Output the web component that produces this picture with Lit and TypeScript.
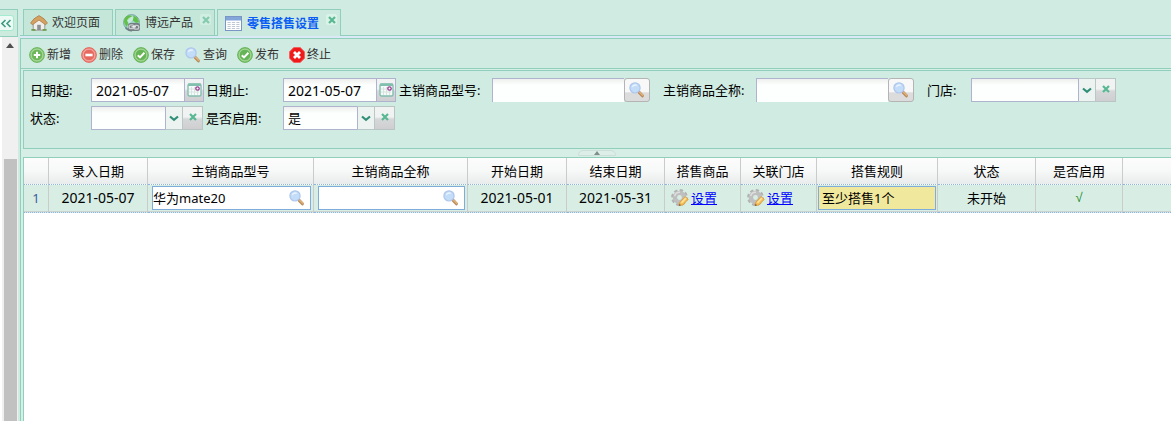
import { LitElement, html, css, svg, nothing } from "lit";
import { customElement, property } from "lit/decorators.js";

const search = html`<svg width="16" height="16" viewBox="0 0 16 16" aria-hidden="true">
  <path d="M10.2 10.4 13.4 13.8" stroke="#b98a5a" stroke-width="3" stroke-linecap="round" />
  <path d="M10.6 10.2 13.6 13.2" stroke="#e3b27a" stroke-width="1.4" stroke-linecap="round" />
  <circle cx="6" cy="5.9" r="5.1" fill="#c3dcf8" stroke="#aec6ec" stroke-width="1.2" />
  <path d="M2.8 5.4A3.3 3.3 0 0 1 8.6 3.4Q5 3.6 2.8 5.4Z" fill="#e9f4ff" />
</svg>`;

const disc = (light: string, dark: string, glyph: unknown) => html`<svg width="16" height="16" viewBox="0 0 16 16" aria-hidden="true">
  <circle cx="8" cy="8" r="7.4" fill=${light} stroke=${dark} stroke-opacity="0.75" stroke-width="1" />
  <circle cx="8" cy="8" r="5.7" fill=${dark} fill-opacity="0.6" stroke="#fff" stroke-opacity="0.4" stroke-width="0.8" />
  ${glyph}
</svg>`;

const add = disc("#8fcc7c", "#55a845", svg`<path d="M8 4.800v6.400M4.800 8h6.400" stroke="#fff" stroke-width="2" />`);
const remove = disc("#f08a80", "#e0534a", svg`<path d="M4.400 8h7.200" stroke="#fff" stroke-width="2.600" />`);
const accept = disc("#88ca76", "#4fa540", svg`<path d="M4.800 8.200 7 10.400 11.400 5.800" fill="none" stroke="#fff" stroke-width="2" />`);
const stop = html`<svg width="16" height="16" viewBox="0 0 16 16" aria-hidden="true">
  <path d="M4.800.5h6.400l4.300 4.300v6.400l-4.300 4.300H4.800L.5 11.200V4.800Z" fill="#f01a1a" stroke="#f46060" stroke-width="1" />
  <path d="M5 5l6 6M11 5l-6 6" stroke="#fff" stroke-width="2.800" />
</svg>`;

const home = html`<svg width="18" height="17" viewBox="0 0 18 17" aria-hidden="true">
  <path d="M3.200 8v7.200h11.600V8L9 2.800Z" fill="#efeeea" stroke="#9a9c98" stroke-width="1" />
  <path d="M9 .6 4 3.800.6 8 2.400 9.800 9 5l6.600 4.800L17.400 8 14 3.800Z" fill="#d6a262" stroke="#a97a42" stroke-width=".8" />
  <path d="M7.200 15V9.800h3.600V15Z" fill="#8d8f92" />
  <path d="M1.400 14.800h4M12.600 14.800h4" stroke="#6f9b4a" stroke-width="1.800" />
</svg>`;
const globe = html`<svg width="18" height="18" viewBox="0 0 18 18" aria-hidden="true">
  <circle cx="8.500" cy="8.500" r="7.900" fill="#9bd3c8" stroke="#7ba5a0" />
  <path d="M1 8Q1 2.500 6 1.200L9 2 7 5 4.500 6.500 5 10 3.500 13ZM10 1.500l4 2 2 4.500-3 1-3-2.500Z" fill="#62c046" />
  <path d="M4 6.500Q6 2.500 10.500 2.500Q11 6 6 9.500Z" fill="#d2efe9" fill-opacity=".8" />
  <path d="M2.500 13.500Q5 16.800 9 16.600" stroke="#6c8088" stroke-width="1.600" fill="none" />
  <rect x="5" y="9" width="12" height="8" rx="2.500" fill="#757c82" />
  <rect x="6" y="10.800" width="5" height="3.800" rx="1.900" fill="none" stroke="#c9ced1" stroke-width="1.300" />
  <rect x="10.800" y="11.400" width="5" height="3.800" rx="1.900" fill="none" stroke="#c9ced1" stroke-width="1.300" />
  <path d="M8.500 12.800h4.500" stroke="#f2f4f4" stroke-width="1.200" />
</svg>`;
const sheet = html`<svg width="17" height="15" viewBox="0 0 17 15" aria-hidden="true">
  <rect x=".5" y=".5" width="16" height="14" fill="#fff" stroke="#7895c6" />
  <path d="M1 1h15v3.500H1Z" fill="#83a5da" />
  <path d="M2.500 6.500h12M2.500 8.500h12M2.500 10.500h12M2.500 12.500h12" stroke="#bec7d4" stroke-dasharray="3.200 1.200" />
</svg>`;
const gear = html`<svg width="18" height="18" viewBox="0 0 18 18" aria-hidden="true">
  <circle cx="8.500" cy="8.500" r="6.900" fill="none" stroke="#b2b2b2" stroke-width="3" stroke-dasharray="3.200 2.220" />
  <circle cx="8.500" cy="8.500" r="4.600" fill="none" stroke="#bfbfbf" stroke-width="4.400" />
  <path d="M3.600 7.200A5.200 5.200 0 0 1 9 3.300" fill="none" stroke="#dedede" stroke-width="1.400" />
  <path d="M8 16.600 8.600 13.400 14 7.600 17.200 10.200 12 16Z" fill="#f5bf58" stroke="#d9983a" stroke-width=".8" />
  <path d="M10.500 13.800 15 9" stroke="#ffe6a0" stroke-width="1.500" />
  <path d="M7.800 17l.8-2.200 1.400 1.400Z" fill="#775c38" />
</svg>`;
const calendar = html`<svg width="15" height="14" viewBox="0 0 15 14" aria-hidden="true">
  <rect x="1" y="1" width="13" height="12" rx="1.500" fill="#f4fbf8" stroke="#83bfae" stroke-width="1.400" />
  <path d="M1 1.800h13" stroke="#83bfae" stroke-width="2.400" />
  <path d="M2 6h8M2 9h10M4.500 4v8M7.500 4v8M10.500 8v4" stroke="#d9e4e0" />
  <circle cx="10.500" cy="5.500" r="1.700" fill="#fff" stroke="#9a3c92" stroke-width="1.300" />
</svg>`;
const chevron = html`<svg width="10" height="7" viewBox="0 0 10 7" aria-hidden="true">
  <path d="M1 1.500 5 4.800 9 1.500" fill="none" stroke="#2f8f78" stroke-width="2.200" />
</svg>`;
const cross = html`<svg width="8" height="8" viewBox="0 0 8 8" aria-hidden="true">
  <path d="M1 1l6 6M7 1 1 7" stroke="#58b893" stroke-width="2.200" />
</svg>`;

const shared = css`
  * { box-sizing: border-box; }
  button, input, select { font: inherit; color: inherit; margin: 0; border-radius: 0; outline: none; }
  button { padding: 0; border: 0; background: none; cursor: pointer; }
  svg { display: block; flex: none; }
`;

@customElement("form-field")
class FormField extends LitElement {
  @property() label = "";
  @property() kind: "date" | "lookup" | "combo" | "combo wide" = "combo";
  @property() value = "";

  static styles = [shared, css`
    :host { display: contents; }
    label { line-height: 24px; white-space: nowrap; }
    .box { display: flex; height: 24px; }
    .date { width: 113px; }
    .lookup { width: 158px; }
    .combo { width: 112px; }
    .wide { width: 145px; }
    .text {
      flex: 1; width: 0; min-width: 0; height: 24px; padding: 0 4px;
      border: 1px solid #b0b3cd; appearance: none;
      background: linear-gradient(#eeefee, #fcfffd 6px);
    }
    .date .text { font-size: 14px; }
    .lookup .text { border-right: 0; border-bottom: 0; }
    .trigger {
      display: grid; justify-content: center; align-content: start; flex: none;
      width: 20px; height: 24px; padding-top: 4px;
      border: 1px solid #b0b3cd; border-left: 0;
      background: linear-gradient(#f1f3f2 45%, #d6d7d8 55%, #cfcfd2);
    }
    .date .trigger { width: 19px; }
    .lookup .trigger {
      width: 26px; border: 1px solid #b4b4b4; border-radius: 3px; padding-top: 3px;
      background: linear-gradient(#f8f8f8 60%, #dcdcdc 62%);
    }
    .combo .trigger { border-color: #b9c4c5; padding-top: 6px; }
    .drop { display: grid; flex: 1; grid-template-columns: 1fr 18px; }
    .drop .text { grid-area: 1 / 1 / 2 / 3; width: 100%; }
    .arrow {
      grid-area: 1 / 2; display: grid; justify-content: center; align-content: start; padding-top: 8px;
      border: 1px solid #b7c8c7; border-left-color: #b0b3cd;
      background: #edf3f0; pointer-events: none;
    }
  `];

  render() {
    const combo = this.kind.startsWith("combo");
    const icon = this.kind === "date" ? calendar : this.kind === "lookup" ? search : cross;
    return html`<label for="control">${this.label}:</label>
      <div class="box ${this.kind}">
        ${combo
          ? html`<div class="drop">
              <select id="control" class="text"><option>${this.value}</option></select>
              <span class="arrow">${chevron}</span>
            </div>`
          : html`<input id="control" class="text" type="text" .value=${this.value} />`}
        <button class="trigger" type="button" aria-label=${this.label}>${icon}</button>
      </div>`;
  }
}

const tabs = [
  { text: "欢迎页面", icon: home, closable: false, active: false },
  { text: "博远产品", icon: globe, closable: true, active: false },
  { text: "零售搭售设置", icon: sheet, closable: true, active: true },
];
const actions = [
  { text: "新增", icon: add },
  { text: "删除", icon: remove },
  { text: "保存", icon: accept },
  { text: "查询", icon: search },
  { text: "发布", icon: accept },
  { text: "终止", icon: stop },
];
const columns = [
  { title: "", width: 25 },
  { title: "录入日期", width: 99 },
  { title: "主销商品型号", width: 166 },
  { title: "主销商品全称", width: 154 },
  { title: "开始日期", width: 99 },
  { title: "结束日期", width: 98 },
  { title: "搭售商品", width: 76 },
  { title: "关联门店", width: 76 },
  { title: "搭售规则", width: 121 },
  { title: "状态", width: 98 },
  { title: "是否启用", width: 87 },
];
const rows = [
  { entered: "2021-05-07", model: "华为mate20", name: "", from: "2021-05-01", to: "2021-05-31", rule: "至少搭售1个", state: "未开始", enabled: "√" },
];

@customElement("app-root")
class AppRoot extends LitElement {
  static styles = [shared, css`
    :host {
      display: flex; height: 100vh; overflow: hidden; padding-top: 9px;
      background: #d0ebe1; color: #000;
      font: 13px/18px "Noto Sans", "Noto Sans CJK SC", sans-serif;
    }
    .side { display: flex; flex-direction: column; flex: none; width: 18px; }
    .side-head {
      display: flex; align-items: center; height: 28px; flex: none;
      border: 1px solid #90cfbb; border-left: 0; background: #cdeade;
    }
    .collapse {
      display: grid; place-items: center; width: 14px; height: 16px;
      background: #eefaf5; border: 1px solid #a5ebcf; border-left: 0; border-radius: 0 3px 3px 0;
    }
    .track {
      flex: 1; display: flex; flex-direction: column; align-items: center;
      border-left: 2px solid #fff; background: #f0f0f0; padding-top: 6px;
    }
    .thumb { width: 13px; flex: 1; margin-top: 111px; background: #c1c1c1; }
    .main { flex: 1; min-width: 0; display: flex; flex-direction: column; margin-left: 2px; }
    .tabs {
      display: flex; flex: none; gap: 2px; height: 27px; padding-left: 3px;
      border-bottom: 1px solid #90cfbb; font-size: 12px;
    }
    .tab {
      display: flex; align-items: center; gap: 7px; height: 26px; padding: 1px 12px 0 6px;
      border: 1px solid #90cfbb; border-bottom: 0; background: #c5e7da; color: #333;
    }
    .tab.closable { padding-right: 3px; padding-left: 7px; }
    .tab.active { height: 27px; background: #cbe9de; color: #0a5cf5; font-weight: bold; }
    .tab button { color: inherit; font-weight: inherit; }
    .open { display: flex; align-items: center; gap: 4px; }
    .active .open { gap: 5px; }
    .close {
      display: grid; place-items: center; width: 11px; height: 11px; align-self: start; margin-top: 3px;
      background: #d9f3e8; border-radius: 2px; opacity: 0.6;
    }
    .active .close { opacity: 1; }
    .strip { flex: none; height: 2px; background: #dbe8f6; }
    .work { flex: 1; min-height: 0; display: flex; flex-direction: column; border: 1px solid #90cfbb; border-width: 1px 0 0 1px; }
    .tools {
      display: flex; flex: none; align-items: center; gap: 10px; height: 30px; padding: 2px 0 0 8px;
      border-bottom: 1px solid #90cfbb; font-size: 12px; color: #333;
    }
    .tools button { display: flex; align-items: center; gap: 2px; }
    .body { flex: 1; min-height: 0; display: flex; flex-direction: column; padding: 1px 0 0 2px; background: #d6eee5; }
    .query {
      display: grid; flex: none; height: 79px; padding: 7px 0 0 6px;
      grid-template-columns: 61px 115px 77px 116px 93px 171px 93px 171px 44px 145px;
      align-content: start; row-gap: 4px;
      border: 1px solid #90cfbb; border-right: 0; background: #d0ebe1;
    }
    .next { grid-column: 1 / -1; display: grid; grid-template-columns: subgrid; }
    .split { display: flex; justify-content: center; align-items: end; flex: none; height: 8px; }
    .handle { display: grid; place-items: center; width: 38px; height: 6px; margin-bottom: 1px; background: #dceee7; border: 1px solid #cde0d8; border-radius: 5px 5px 0 0; }
    .grid { flex: 1; min-height: 0; background: #fff; border: 1px solid #90cfbb; border-width: 1px 0 0 1px; overflow: hidden; }
    table { width: 100%; table-layout: fixed; border-collapse: separate; border-spacing: 0; }
    th, td { padding: 0; text-align: center; white-space: nowrap; border-bottom: 1px dotted #8fb4de; border-right: 1px solid #c9cccb; }
    th:last-child, td:last-child { border-right: 0; }
    th { height: 27px; font-weight: normal; background: linear-gradient(#fcfcfc, #f7f8f8 50%, #e9ecec); }
    td { height: 28px; padding-bottom: 2px; background: #d8eee5; box-shadow: inset 0 -1px #ccd2cf; }
    td.num { color: #3c5a99; }
    td.date { font-size: 14px; }
    td.ok { color: #188a1c; font: 13px/18px "Liberation Sans", sans-serif; }
    .edit { display: flex; align-items: center; height: 24px; margin: 0 2px 0 4px; padding-right: 5px; border: 1px solid #7eadd9; background: #fff; }
    .edit input { flex: 1; width: 0; min-width: 0; height: 22px; padding: 0; border: 0; background: none; }
    .edit.rule { margin: 0 1px; padding: 0; background: #f0e89c; }
    .edit.rule input { padding-left: 3px; }
    .set { display: flex; align-items: center; gap: 2px; padding-left: 6px; }
    .set a { color: #00f; }
  `];

  render() {
    return html`
      <aside class="side">
        <div class="side-head">
          <button class="collapse" aria-label="收起">
            <svg width="11" height="9" viewBox="0 0 11 9"><path d="M4.500 1 1 4.500l3.500 3.500M9.500 1 6 4.500l3.500 3.500" fill="none" stroke="#3d9c80" stroke-width="1.600" /></svg>
          </button>
        </div>
        <div class="track">
          <svg width="8" height="5" viewBox="0 0 8 5"><path d="M0 5 4 0l4 5Z" fill="#505050" /></svg>
          <div class="thumb"></div>
        </div>
      </aside>
      <main class="main">
        <nav class="tabs">
          ${tabs.map((t) => html`<div class="tab ${t.active ? "active" : ""} ${t.closable ? "closable" : ""}">
            <button class="open">${t.icon}<span>${t.text}</span></button>
            ${t.closable ? html`<button class="close" aria-label="关闭">${cross}</button>` : nothing}
          </div>`)}
        </nav>
        <div class="strip"></div>
        <section class="work">
          <div class="tools">
            ${actions.map((a) => html`<button>${a.icon}<span>${a.text}</span></button>`)}
          </div>
          <div class="body">
            <form class="query">
              <form-field label="日期起" kind="date" value="2021-05-07"></form-field>
              <form-field label="日期止" kind="date" value="2021-05-07"></form-field>
              <form-field label="主销商品型号" kind="lookup"></form-field>
              <form-field label="主销商品全称" kind="lookup"></form-field>
              <form-field label="门店" kind="combo wide"></form-field>
              <div class="next">
                <form-field label="状态" kind="combo"></form-field>
                <form-field label="是否启用" kind="combo" value="是"></form-field>
              </div>
            </form>
            <div class="split">
              <div class="handle"><svg width="6" height="4" viewBox="0 0 6 4"><path d="M0 4 3 0l3 4Z" fill="#7d8f88" /></svg></div>
            </div>
            <div class="grid">
              <table>
                <colgroup>
                  ${columns.map((c) => html`<col style="width:${c.width}px" />`)}
                  <col />
                </colgroup>
                <thead>
                  <tr>${columns.map((c) => html`<th>${c.title}</th>`)}<th></th></tr>
                </thead>
                <tbody>
                  ${rows.map((r, i) => html`<tr>
                    <td class="num">${i + 1}</td>
                    <td class="date">${r.entered}</td>
                    <td><div class="edit"><input aria-label="主销商品型号" .value=${r.model} />${search}</div></td>
                    <td><div class="edit"><input aria-label="主销商品全称" .value=${r.name} />${search}</div></td>
                    <td class="date">${r.from}</td>
                    <td class="date">${r.to}</td>
                    <td><div class="set">${gear}<a href="#goods">设置</a></div></td>
                    <td><div class="set">${gear}<a href="#stores">设置</a></div></td>
                    <td><div class="edit rule"><input aria-label="搭售规则" .value=${r.rule} /></div></td>
                    <td>${r.state}</td>
                    <td class="ok">${r.enabled}</td>
                    <td></td>
                  </tr>`)}
                </tbody>
              </table>
            </div>
          </div>
        </section>
      </main>
    `;
  }
}
